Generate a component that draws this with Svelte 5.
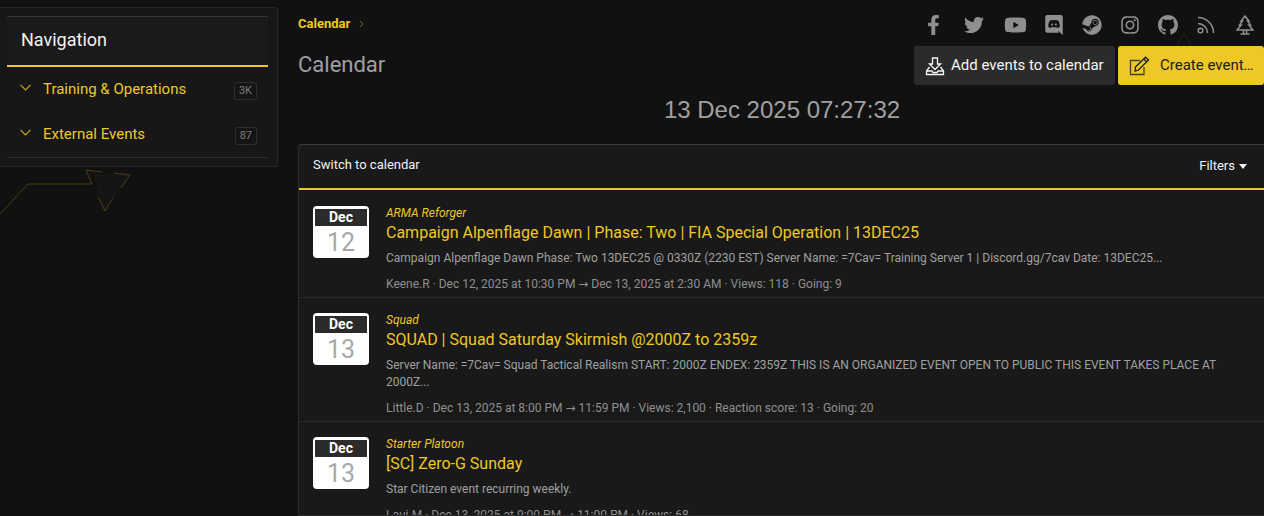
<script>
  const events = [
    { mon: 'Dec', day: '12', cat: 'ARMA Reforger', title: 'Campaign Alpenflage Dawn | Phase: Two | FIA Special Operation | 13DEC25', desc: 'Campaign Alpenflage Dawn Phase: Two 13DEC25 @ 0330Z (2230 EST) Server Name: =7Cav= Training Server 1 | Discord.gg/7cav Date: 13DEC25...', meta: 'Keene.R · Dec 12, 2025 at 10:30 PM → Dec 13, 2025 at 2:30 AM · Views: 118 · Going: 9' },
    { mon: 'Dec', day: '13', cat: 'Squad', title: 'SQUAD | Squad Saturday Skirmish @2000Z to 2359z', desc: 'Server Name: =7Cav= Squad Tactical Realism START: 2000Z ENDEX: 2359Z THIS IS AN ORGANIZED EVENT OPEN TO PUBLIC THIS EVENT TAKES PLACE AT 2000Z...', meta: 'Little.D · Dec 13, 2025 at 8:00 PM → 11:59 PM · Views: 2,100 · Reaction score: 13 · Going: 20' },
    { mon: 'Dec', day: '13', cat: 'Starter Platoon', title: '[SC] Zero-G Sunday', desc: 'Star Citizen event recurring weekly.', meta: 'Laui.M · Dec 13, 2025 at 9:00 PM → 11:00 PM · Views: 68' }
  ];
  const nav = [
    { label: 'Training & Operations', count: '3K' },
    { label: 'External Events', count: '87' }
  ];
</script>

<div class="page">
  <svg class="deco" width="150" height="70" viewBox="0 0 150 70" aria-hidden="true">
    <path class="tri" d="M95 15 L128 15 L105 50 Z" />
    <path class="ln" d="M0 54 L28 24 L92 24 L86 10 L102 12 M114 13 L130 15 L121 28 M113 38 L105 51 L98 37" />
  </svg>
  <svg class="deco2" width="16" height="14" viewBox="0 0 16 14" aria-hidden="true">
    <path d="M1 13 L8 1 L15 13" />
  </svg>

  <aside class="sidebar">
    <div class="nav-inner">
      <h3 class="nav-title">Navigation</h3>
      <ul class="nav-list">
        {#each nav as item}
          <li class="nav-item">
            <svg class="chev" width="11" height="7" viewBox="0 0 11 7"><path d="M.5 .8 L5.5 5.8 L10.5 .8" /></svg>
            <span class="nav-label">{item.label}</span>
            <span class="count">{item.count}</span>
          </li>
        {/each}
      </ul>
    </div>
  </aside>

  <main class="main">
    <header class="top">
      <div class="top-left">
        <div class="crumb">Calendar <svg class="crumb-sep" width="5" height="8" viewBox="0 0 5 8"><path d="M.7 .7 L4 4 L.7 7.3"/></svg></div>
        <h1 class="title">Calendar</h1>
      </div>
      <div class="top-right">
        <div class="socials">
          <svg class="s w13" viewBox="0 0 320 512"><path d="M279.14 288l14.22-92.66h-88.91v-60.13c0-25.35 12.42-50.06 52.24-50.06h40.42V6.26S260.43 0 225.36 0c-73.22 0-121.08 44.38-121.08 124.72v70.62H22.89V288h81.39v224h100.17V288z"/></svg>
          <svg class="s w20" viewBox="0 0 512 512"><path d="M459.37 151.716c.325 4.548.325 9.097.325 13.645 0 138.72-105.583 298.558-298.558 298.558-59.452 0-114.68-17.219-161.137-47.106 8.447.974 16.568 1.299 25.34 1.299 49.055 0 94.213-16.568 130.274-44.832-46.132-.975-84.792-31.188-98.112-72.772 6.498.974 12.995 1.624 19.818 1.624 9.421 0 18.843-1.3 27.614-3.573-48.081-9.747-84.143-51.98-84.143-102.985v-1.299c13.969 7.797 30.214 12.67 47.431 13.319-28.264-18.843-46.781-51.005-46.781-87.391 0-19.492 5.197-37.36 14.294-52.954 51.655 63.675 129.3 105.258 216.365 109.807-1.624-7.797-2.599-15.918-2.599-24.04 0-57.828 46.782-104.934 104.934-104.934 30.213 0 57.502 12.67 76.67 33.137 23.715-4.548 46.456-13.32 66.599-25.34-7.798 24.366-24.366 44.833-46.132 57.827 21.117-2.273 41.584-8.122 60.426-16.243-14.292 20.791-32.161 39.308-52.628 54.253z"/></svg>
          <svg class="s w23" viewBox="0 0 576 512"><path d="M549.655 124.083c-6.281-23.65-24.787-42.276-48.284-48.597C458.781 64 288 64 288 64S117.22 64 74.629 75.486c-23.497 6.322-42.003 24.947-48.284 48.597-11.412 42.867-11.412 132.305-11.412 132.305s0 89.438 11.412 132.305c6.281 23.65 24.787 41.5 48.284 47.821C117.22 448 288 448 288 448s170.78 0 213.371-11.486c23.497-6.321 42.003-24.171 48.284-47.821 11.412-42.867 11.412-132.305 11.412-132.305s0-89.438-11.412-132.305zm-317.51 213.508V175.185l142.739 81.205-142.739 81.201z"/></svg>
          <svg class="s w18" viewBox="0 0 448 512"><path d="M297.216 243.2c0 15.616-11.52 28.416-26.112 28.416-14.336 0-26.112-12.8-26.112-28.416s11.52-28.416 26.112-28.416c14.592 0 26.112 12.8 26.112 28.416zm-119.552-28.416c-14.592 0-26.112 12.8-26.112 28.416s11.776 28.416 26.112 28.416c14.592 0 26.112-12.8 26.112-28.416.256-15.616-11.52-28.416-26.112-28.416zM448 52.736V512c-64.494-56.994-43.868-38.128-118.784-107.776l13.568 47.36H52.48C23.552 451.584 0 428.032 0 398.848V52.736C0 23.552 23.552 0 52.48 0h343.04C424.448 0 448 23.552 448 52.736zm-72.96 242.688c0-82.432-36.864-149.248-36.864-149.248-36.864-27.648-71.936-26.88-71.936-26.88l-3.584 4.096c43.52 13.312 63.744 32.512 63.744 32.512-60.811-33.329-132.244-33.335-191.232-7.424-9.472 4.352-15.104 7.424-15.104 7.424s21.248-20.224 67.328-33.536l-2.56-3.072s-35.072-.768-71.936 26.88c0 0-36.864 66.816-36.864 149.248 0 0 21.504 37.12 78.08 38.912 0 0 9.472-11.52 17.152-21.248-32.512-9.728-44.8-30.208-44.8-30.208 3.766 2.636 9.976 6.053 10.496 6.4 43.21 24.198 104.588 32.126 159.744 8.96 8.96-3.328 18.944-8.192 29.44-15.104 0 0-12.8 20.992-46.336 30.464 7.68 9.728 16.896 20.736 16.896 20.736 56.576-1.792 78.336-38.912 78.336-38.912z"/></svg>
          <svg class="s w20" viewBox="0 0 496 512"><path d="M496 256c0 137-111.2 248-248.4 248-113.8 0-209.6-76.3-239-180.4l95.2 39.3c6.4 32.1 34.9 56.4 68.9 56.4 39.2 0 71.9-32.4 70.2-73.5l84.5-60.2c52.1 1.3 95.8-40.9 95.8-93.5 0-51.6-42-93.5-93.7-93.5s-93.7 42-93.7 93.5v1.2L176.6 279c-15.5-.9-30.7 3.4-43.5 12.1L0 236.1C10.2 108.4 117.1 8 247.6 8 384.8 8 496 119 496 256zM155.7 384.3l-30.5-12.6a52.79 52.79 0 0 0 27.2 25.8c26.9 11.2 57.8-1.6 69-28.4 5.4-13 5.5-27.3.1-40.3-5.4-13-15.5-23.2-28.5-28.6-12.9-5.4-26.7-5.2-38.9-.6l31.5 13c19.8 8.2 29.2 30.9 20.9 50.7-8.3 19.9-31 29.2-50.8 21zm173.8-129.9c-34.4 0-62.4-28-62.4-62.3s28-62.3 62.4-62.3 62.4 28 62.4 62.3-27.9 62.3-62.4 62.3zm.1-15.6c25.9 0 46.9-21 46.9-46.8 0-25.9-21-46.8-46.9-46.8s-46.9 21-46.9 46.8c.1 25.8 21.1 46.8 46.9 46.8z"/></svg>
          <svg class="s w18" viewBox="0 0 448 512"><path d="M224.1 141c-63.6 0-114.9 51.3-114.9 114.9s51.3 114.9 114.9 114.9S339 319.5 339 255.9 287.7 141 224.1 141zm0 189.6c-41.1 0-74.7-33.5-74.7-74.7s33.5-74.7 74.7-74.7 74.7 33.5 74.7 74.7-33.6 74.7-74.7 74.7zm146.4-194.3c0 14.9-12 26.8-26.8 26.8-14.9 0-26.8-12-26.8-26.8s12-26.8 26.8-26.8 26.8 12 26.8 26.8zm76.1 27.2c-1.7-35.9-9.9-67.7-36.2-93.9-26.2-26.2-58-34.4-93.9-36.2-37-2.1-147.9-2.1-184.9 0-35.8 1.7-67.6 9.9-93.9 36.1s-34.4 58-36.2 93.9c-2.1 37-2.1 147.9 0 184.9 1.7 35.9 9.9 67.7 36.2 93.9s58 34.4 93.9 36.2c37 2.1 147.9 2.1 184.9 0 35.9-1.7 67.7-9.9 93.9-36.2 26.2-26.2 34.4-58 36.2-93.9 2.1-37 2.1-147.8 0-184.8zM398.8 388c-7.8 19.6-22.9 34.7-42.6 42.6-29.5 11.7-99.5 9-132.1 9s-102.7 2.6-132.1-9c-19.6-7.8-34.7-22.9-42.6-42.6-11.7-29.5-9-99.5-9-132.1s-2.6-102.7 9-132.1c7.8-19.6 22.9-34.7 42.6-42.6 29.5-11.7 99.5-9 132.1-9s102.7-2.6 132.1 9c19.6 7.8 34.7 22.9 42.6 42.6 11.7 29.5 9 99.5 9 132.1s2.7 102.7-9 132.1z"/></svg>
          <svg class="s w20" viewBox="0 0 16 16"><path d="M8 0C3.58 0 0 3.58 0 8c0 3.54 2.29 6.53 5.47 7.59.4.07.55-.17.55-.38 0-.19-.01-.82-.01-1.49-2.01.37-2.53-.49-2.69-.94-.09-.23-.48-.94-.82-1.13-.28-.15-.68-.52-.01-.53.63-.01 1.08.58 1.23.82.72 1.21 1.87.87 2.33.66.07-.52.28-.87.51-1.07-1.78-.2-3.64-.89-3.64-3.95 0-.87.31-1.59.82-2.15-.08-.2-.36-1.02.08-2.12 0 0 .67-.21 2.2.82.64-.18 1.32-.27 2-.27.68 0 1.36.09 2 .27 1.53-1.04 2.2-.82 2.2-.82.44 1.1.16 1.92.08 2.12.51.56.82 1.27.82 2.15 0 3.07-1.87 3.75-3.65 3.95.29.25.54.73.54 1.48 0 1.07-.01 1.93-.01 2.2 0 .21.15.46.55.38A8.013 8.013 0 0016 8c0-4.42-3.58-8-8-8z"/></svg>
          <svg class="o w18" viewBox="0 0 18 20"><circle cx="3.5" cy="15.5" r="2.3"/><path d="M1 8.5 A9.5 9.5 0 0 1 10.5 18 M1 2.5 A15.5 15.5 0 0 1 16.5 18"/></svg>
          <svg class="o w18" viewBox="0 0 18 20"><path d="M9 1 L13 6 H11.5 L14.5 10 H12.8 L17 15 H1 L5.2 10 H3.5 L6.5 6 H5 Z M7.5 15 V19 H10.5 V15 M4.5 19 H13.5"/></svg>
        </div>
        <div class="buttons">
          <button class="btn btn-dark">
            <svg width="20" height="20" viewBox="0 0 20 20" class="bi"><path d="M7.5 2 H12.5 V8 H15.5 L10 13.5 L4.5 8 H7.5 Z"/><path d="M4.5 11 L1.5 15 V18.5 H18.5 V15 L15.5 11 M1.5 15 H7 L8 16.5 H12 L13 15 H18.5"/></svg>
            <span>Add events to calendar</span>
          </button>
          <button class="btn btn-yellow">
            <svg width="21" height="20" viewBox="0 0 21 20" class="bi2"><path class="green" d="M15 11 V18.5 H1.5 V4.5 H11"/><path d="M6.5 11 L16.5 1.2 L19.5 4 L9.5 14 L6 15 Z M14.8 3 L17.8 6"/></svg>
            <span>Create event…</span>
          </button>
        </div>
      </div>
    </header>

    <div class="clock">13 Dec 2025 07:27:32</div>

    <section class="panel">
      <div class="panel-head">
        <span>Switch to calendar</span>
        <span class="filters">Filters <i class="caret"></i></span>
      </div>
      {#each events as e}
        <article class="row">
          <div class="date">
            <div class="mon">{e.mon}</div>
            <div class="day">{e.day}</div>
          </div>
          <div class="body">
            <div class="cat">{e.cat}</div>
            <div class="ev-title">{e.title}</div>
            <div class="desc">{e.desc}</div>
            <div class="meta">{e.meta}</div>
          </div>
        </article>
      {/each}
    </section>
  </main>
</div>

<style>
  :global(body) {
    margin: 0;
    background: #111111;
    overflow: hidden;
  }
  .page {
    position: relative;
    display: flex;
    height: 516px;
    overflow: hidden;
    font-family: Roboto, "Liberation Sans", sans-serif;
    color: #a0a0a0;
    background: #111111;
  }
  .deco { position: absolute; left: 0; top: 160px; }
  .deco .tri { fill: #141414; stroke: #1b1b1b; }
  .deco .ln { fill: none; stroke: #4a3e14; stroke-width: 1; }
  .deco2 { position: absolute; left: 1176px; top: 32px; }
  .deco2 path { fill: none; stroke: #2a2510; }

  .sidebar {
    position: relative;
    flex: none;
    box-sizing: border-box;
    width: 278px;
    height: 160px;
    margin-top: 7px;
    padding: 8px 9px 7px 7px;
    background: #171717;
    border: 1px solid #262626;
    border-left: 0;
    border-radius: 0 3px 3px 0;
  }
  .nav-inner { border-bottom: 1px solid #2c2c2c; height: 142px; box-sizing: border-box; }
  .nav-title {
    margin: 0;
    box-sizing: border-box;
    height: 51px;
    padding: 0 14px;
    font-size: 18px;
    font-weight: 400;
    line-height: 45px;
    color: #f2f2f2;
    background: #1a1a1a;
    border-top: 1px solid #363636;
    border-bottom: 2px solid #edc826;
  }
  .nav-list { margin: 0; padding: 0; list-style: none; }
  .nav-item {
    display: flex;
    align-items: flex-start;
    height: 45px;
    box-sizing: border-box;
    padding: 13px 11px 0 13px;
    font-size: 15px;
    line-height: 18px;
    color: #edc826;
  }
  .chev { margin-top: 4px; margin-right: 12px; flex: none; }
  .chev path { fill: none; stroke: #c9a520; stroke-width: 1.2; }
  .nav-label { flex: 1; }
  .count {
    box-sizing: border-box;
    margin-top: 2px;
    height: 18px;
    padding: 0 4px;
    font-size: 11px;
    line-height: 16px;
    color: #7c7c7c;
    border: 1px solid #2e2e2e;
    border-radius: 3px;
    background: #151515;
  }

  .main { position: relative; flex: 1; min-width: 0; margin-left: 20px; display: flex; flex-direction: column; }
  .top { display: flex; justify-content: space-between; height: 86px; }
  .crumb { margin-top: 15px; font-size: 13px; line-height: 17px; font-weight: 700; color: #edc826; }
  .crumb-sep { margin-left: 6px; }
  .crumb-sep path { fill: none; stroke: #77701c; stroke-width: 1; }
  .title { margin: 17px 0 0; font-size: 22px; font-weight: 400; line-height: 32px; color: #a0a0a0; }
  .top-right { display: flex; flex-direction: column; align-items: flex-end; }
  .socials {
    display: grid;
    grid-template-columns: 39px 43px 39px 39px 37px 39px 37px 39px 39px;
    justify-items: center;
    align-items: center;
    box-sizing: border-box;
    height: 46px;
    padding-top: 3px;
    margin-right: -0.5px;
  }
  .socials svg { display: block; height: 20px; }
  .w13 { width: 13px; }
  .w18 { width: 18px; }
  .w20 { width: 20px; }
  .w23 { width: 23px; }
  .s path { fill: #8f8f8f; }
  .o { fill: none; stroke: #8f8f8f; stroke-width: 1.5; }
  .buttons { display: flex; gap: 3px; }
  .btn {
    display: flex;
    align-items: center;
    height: 39px;
    border: 0;
    border-radius: 3px;
    font-family: inherit;
    font-size: 15px;
    padding: 0;
  }
  .btn span { position: relative; top: -1px; }
  .btn-dark { width: 201px; padding-left: 11px; gap: 6px; background: #2b2b2b; color: #f5f5f5; }
  .btn-yellow { width: 146px; padding-left: 11px; gap: 10px; background: #edc826; color: #1c1c1c; }
  .bi path { fill: none; stroke: #f5f5f5; stroke-width: 1.3; }
  .bi2 path { fill: none; stroke: #1c1c1c; stroke-width: 1.3; }
  .bi2 .green { stroke: #3c4a1a; }

  .clock {
    height: 58px;
    padding: 9px 0 0 2px;
    box-sizing: border-box;
    text-align: center;
    font-family: "Liberation Sans", Arial, sans-serif;
    font-size: 24px;
    line-height: 30px;
    color: #a0a0a0;
  }
  .panel {
    background: #191919;
    border: 1px solid #2a2a2a;
    border-top: 1px solid #3a3a3a;
    border-right: 0;
    border-radius: 3px 0 0 0;
    flex: 1;
    overflow: hidden;
  }
  .panel-head {
    display: flex;
    justify-content: space-between;
    box-sizing: border-box;
    height: 45px;
    padding: 12px 17px 0 14px;
    font-size: 13px;
    line-height: 16px;
    color: #f2f2f2;
    border-bottom: 2px solid #edc826;
  }
  .filters { display: inline-flex; align-items: center; height: 18px; gap: 4px; }
  .caret { width: 0; height: 0; border-left: 4.5px solid transparent; border-right: 4.5px solid transparent; border-top: 5px solid #f2f2f2; }
  .row {
    display: flex;
    box-sizing: border-box;
    padding: 16px 14px 4.2px 14px;
  }
  .row + .row {
    padding-top: 15px;
    border-top: 1px solid #2a2a2a;
  }
  .date {
    flex: none;
    box-sizing: border-box;
    width: 56px;
    height: 52px;
    padding: 3px 2px 0;
    background: #ffffff;
    border-radius: 4px;
    text-align: center;
  }
  .mon {
    height: 17px;
    font-size: 14px;
    font-weight: 700;
    line-height: 17px;
    color: #ffffff;
    background: #2b2b2b;
  }
  .day { font-size: 25px; line-height: 34px; color: #a8a8a8; }
  .body { margin-left: 17px; min-width: 0; }
  .cat { font-size: 12px; font-style: italic; line-height: 14px; color: #edc826; }
  .ev-title { margin-top: 1px; font-size: 16px; line-height: 24px; color: #edc826; }
  .desc { margin-top: 5px; font-size: 12px; line-height: 16.8px; color: #a0a0a0; }
  .meta { margin-top: 8px; font-family: Roboto, "DejaVu Sans", sans-serif; font-size: 12px; line-height: 18px; color: #8f8f8f; }
</style>
